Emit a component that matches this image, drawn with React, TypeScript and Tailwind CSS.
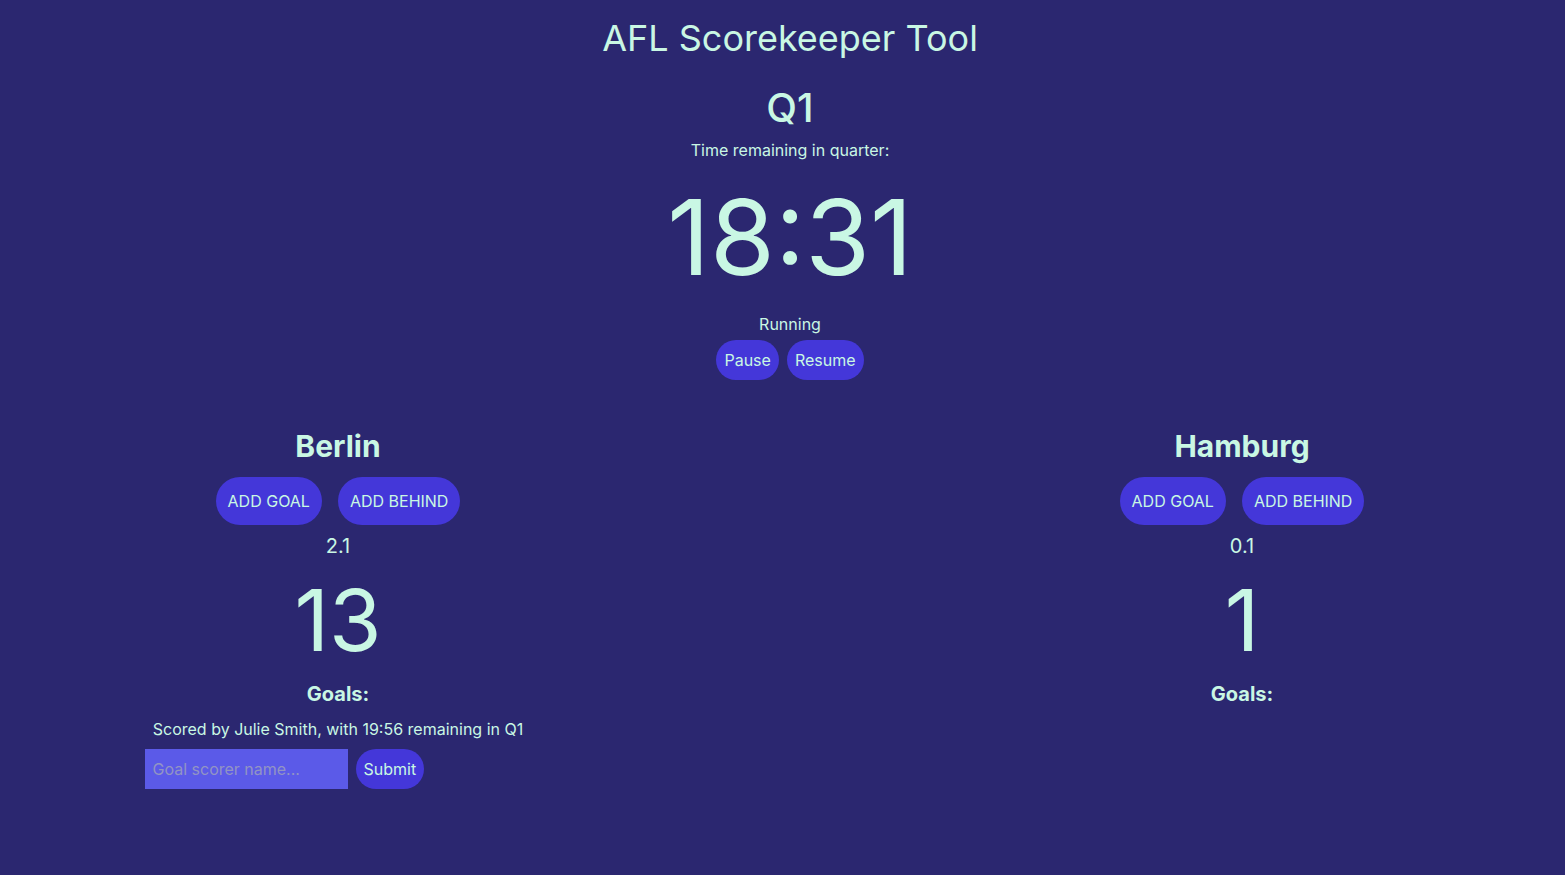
import React from 'react';

interface TeamProps {
  name: string;
  goals: number;
  behinds: number;
  scorers: string[];
  showForm?: boolean;
}

function TeamPanel({ name, goals, behinds, scorers, showForm }: TeamProps) {
  const total = goals * 6 + behinds;
  return (
    <div className="flex flex-col items-center w-[387px]">
      {/* Team name */}
      <h2 className="mt-[46px] text-3xl leading-[40px] font-bold">{name}</h2>

      {/* Score buttons */}
      <div className="mt-[11px] flex gap-4">
        <button className="h-12 px-3 rounded-full bg-[#4437d9] text-base whitespace-nowrap">ADD GOAL</button>
        <button className="h-12 px-3 rounded-full bg-[#4437d9] text-base whitespace-nowrap">ADD BEHIND</button>
      </div>

      <div className="mt-[7px] text-xl leading-[28px]">
        {goals}.{behinds}
      </div>
      <div className="mt-[18px] text-[85px] leading-none">{total}</div>

      <h3 className="mt-[17px] text-xl leading-[28px] font-bold">Goals:</h3>
      {scorers.map((s) => (
        <p key={s} className="mt-[9px] text-base leading-[24px] whitespace-nowrap">
          {s}
        </p>
      ))}

      {showForm && (
        <div className="mt-[8px] flex gap-2 self-start">
          <input
            type="text"
            placeholder="Goal scorer name..."
            className="h-10 w-[203px] px-2 bg-[#5b5ae8] text-base placeholder:text-[#9294c4] outline-none"
          />
          <button className="h-10 px-2 rounded-full bg-[#4437d9] text-base">Submit</button>
        </div>
      )}
    </div>
  );
}

export default function App() {
  return (
    <div
      className="min-h-screen w-full pl-[15px] bg-[#2b2770] text-[#c9f7e4] flex flex-col"
      style={{ fontFamily: 'Inter, "Noto Sans", sans-serif' }}
    >
      {/* Header + clock */}
      <div className="flex flex-col items-center">
        <h1 className="mt-[18px] text-4xl leading-[40px]">AFL Scorekeeper Tool</h1>
        <div className="mt-[26px] text-[40px] leading-[48px] font-medium">Q1</div>
        <p className="mt-[6px] text-base leading-[24px]">Time remaining in quarter:</p>
        <div className="mt-[22px] text-[105px] leading-none">18:31</div>
        <p className="mt-[23px] text-base leading-[24px]">Running</p>
        <div className="mt-[4px] flex gap-2">
          <button className="h-10 px-2 rounded-full bg-[#4437d9] text-base">Pause</button>
          <button className="h-10 px-2 rounded-full bg-[#4437d9] text-base">Resume</button>
        </div>
      </div>

      {/* Teams */}
      <div className="flex justify-center gap-[517px]">
        <TeamPanel
          name="Berlin"
          goals={2}
          behinds={1}
          scorers={['Scored by Julie Smith, with 19:56 remaining in Q1']}
          showForm
        />
        <TeamPanel name="Hamburg" goals={0} behinds={1} scorers={[]} />
      </div>
    </div>
  );
}
